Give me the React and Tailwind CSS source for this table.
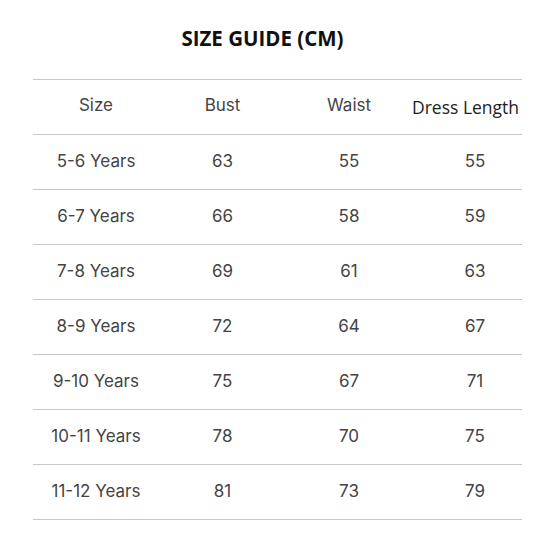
import React from "react";

const ROWS = [
  ["5-6 Years", 63, 55, 55],
  ["6-7 Years", 66, 58, 59],
  ["7-8 Years", 69, 61, 63],
  ["8-9 Years", 72, 64, 67],
  ["9-10 Years", 75, 67, 71],
  ["10-11 Years", 78, 70, 75],
  ["11-12 Years", 81, 73, 79],
];

const GRID = "grid grid-cols-[126px_127px_126px_110px] h-[55px] items-center border-b border-[#c8c8c8]";

export default function App() {
  return (
    <div className="w-[543px] h-[559px] bg-white font-['Inter',sans-serif] text-[#444]">
      <div className="h-[79px] flex items-center justify-center pb-[2px] pr-[18px]">
        <h1 className="font-['Open_Sans',sans-serif] font-bold text-[20.5px] text-[#111]">
          SIZE GUIDE (CM)
        </h1>
      </div>
      <div className="ml-[33px] w-[489px] border-t border-[#c8c8c8] text-[17px]">
        <div className={GRID}>
          <div className="text-center -mt-[3px]">Size</div>
          <div className="text-center -mt-[3px]">Bust</div>
          <div className="text-center -mt-[3px]">Waist</div>
          <div className="text-center pr-3 font-['Open_Sans',sans-serif] text-[17.5px] text-[#222] whitespace-nowrap">
            Dress Length
          </div>
        </div>
        {ROWS.map(([size, bust, waist, len]) => (
          <div key={size} className={GRID}>
            <div className="text-center">{size}</div>
            <div className="text-center">{bust}</div>
            <div className="text-center">{waist}</div>
            <div className="text-center pl-4">{len}</div>
          </div>
        ))}
      </div>
    </div>
  );
}
